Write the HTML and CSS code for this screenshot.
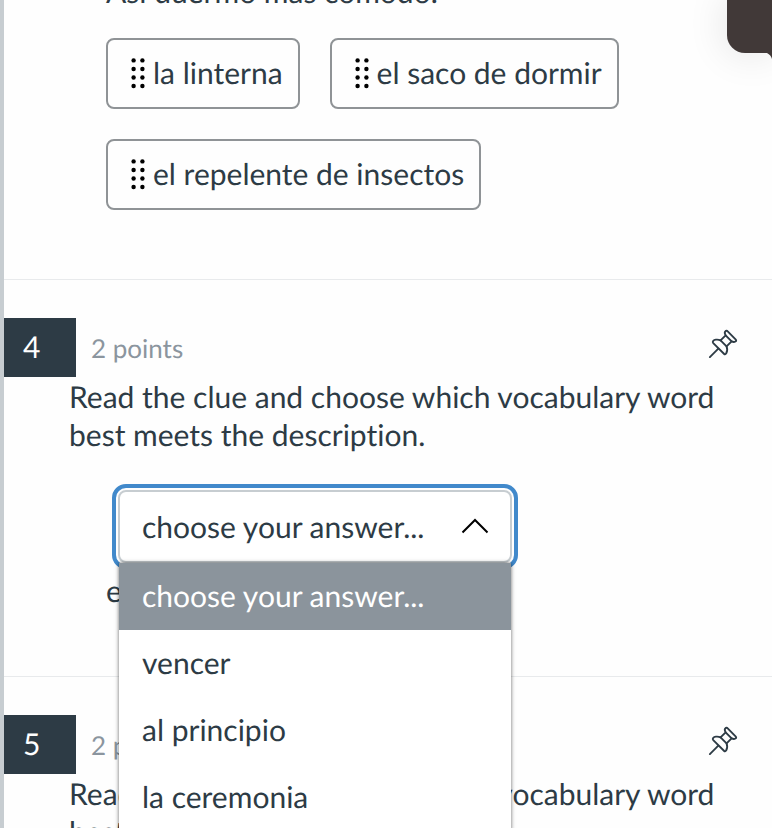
FILE: index.html
```html
<!DOCTYPE html>
<html lang="en">
<head>
    <meta charset="UTF-8">
    <meta name="viewport" content="width=device-width, initial-scale=1.0">
    <title>Vocabulary Quiz</title>
    <link rel="stylesheet" href="styles.css">
</head>
<body>
    <svg class="sprite" aria-hidden="true">
        <symbol id="grip" viewBox="0 0 14 32">
            <circle cx="2.6" cy="3.4" r="2.2"/><circle cx="11.4" cy="3.4" r="2.2"/>
            <circle cx="2.6" cy="12" r="2.2"/><circle cx="11.4" cy="12" r="2.2"/>
            <circle cx="2.6" cy="20.5" r="2.2"/><circle cx="11.4" cy="20.5" r="2.2"/>
            <circle cx="2.6" cy="29" r="2.2"/><circle cx="11.4" cy="29" r="2.2"/>
        </symbol>
        <symbol id="pin" viewBox="0 0 32 32">
            <path d="M2 30 L11 21"/>
            <path d="M5.6 15 C4.2 13.4 6 11.8 8.4 11.4 C10.6 11 12.2 11.6 13.4 12.2 L18.8 6.8 C17.8 5 17.6 3.2 18.6 2.4 C19.4 1.6 20.2 1.8 21 2.6 L29.4 11 C30.4 12 30.2 12.8 29.2 13.4 C27.8 14.2 26.4 13.8 25.2 13.2 L19.8 18.6 C20.8 21.2 20.8 23.8 19.4 26 C18.6 27.4 17.8 27.2 17 26.4 Z"/>
            <path d="M13.4 12.2 L19.8 18.6 M18.8 6.8 L25.2 13.2"/>
        </symbol>
    </svg>

    <main class="quiz">
        <section class="question question-drag">
            <p class="prompt">Así duermo más cómodo.</p>
            <div class="chips">
                <button class="chip"><svg class="grip"><use href="#grip"/></svg>la linterna</button>
                <button class="chip"><svg class="grip"><use href="#grip"/></svg>el saco de dormir</button>
                <button class="chip"><svg class="grip"><use href="#grip"/></svg>el repelente de insectos</button>
            </div>
        </section>

        <section class="question">
            <header class="question-header">
                <span class="number">4</span>
                <span class="points">2 points</span>
                <button class="pin" aria-label="Pin question 4"><svg><use href="#pin"/></svg></button>
            </header>
            <p class="text">Read the clue and choose which vocabulary word best meets the description.</p>
            <div class="answer">
                <div class="dropdown">
                    <select class="dropdown-select" aria-label="Answer for question 4">
                        <option>choose your answer...</option>
                        <option>vencer</option>
                        <option>al principio</option>
                        <option>la ceremonia</option>
                    </select>
                    <svg class="arrow" viewBox="0 0 28 16"><path d="M1.5 14.5 L14 2 L26.5 14.5"/></svg>
                    <ul class="dropdown-list" role="listbox" aria-label="Answers">
                        <li class="option selected" role="option" aria-selected="true">choose your answer...</li>
                        <li class="option" role="option">vencer</li>
                        <li class="option" role="option">al principio</li>
                        <li class="option" role="option">la ceremonia</li>
                    </ul>
                </div>
                <p class="clue">e</p>
            </div>
        </section>

        <section class="question">
            <header class="question-header">
                <span class="number">5</span>
                <span class="points">2 points</span>
                <button class="pin" aria-label="Pin question 5"><svg><use href="#pin"/></svg></button>
            </header>
            <p class="text">Read the clue and choose which vocabulary word best meets the description.</p>
        </section>
    </main>

    <div class="bubble">
        <svg class="bubble-tail" viewBox="0 0 5 6"><path d="M0 0 H5 V6 Q4 2 0 0 Z"/></svg>
    </div>
</body>
</html>
```

FILE: styles.css
```css
* {
    margin: 0;
    padding: 0;
    box-sizing: border-box;
}

body {
    font-family: Lato, sans-serif;
    font-size: 30px;
    line-height: 38px;
    font-variant-ligatures: none;
    text-rendering: geometricPrecision;
    color: #2d3b45;
    background: #fefefe;
    height: 100vh;
    overflow: hidden;
}

button,
select {
    font: inherit;
    color: inherit;
    text-rendering: inherit;
    background: none;
    border: none;
    cursor: pointer;
}

.sprite {
    display: none;
}

.quiz {
    height: 100vh;
    overflow: hidden;
    border-left: 4px solid #c7cdd1;
}

.question {
    padding: 38px 34px 66px 0;
    border-top: 1px solid #e8eaec;
}

/* scrolled partly out of view */
.question-drag {
    margin-top: -27px;
    padding: 0 102px 69px;
    border-top: none;
}

.chips {
    display: flex;
    flex-wrap: wrap;
    gap: 30px;
    margin-top: 27px;
}

.chip {
    display: flex;
    align-items: center;
    gap: 8px;
    padding: 14px 15px 15px 23px;
    border: 2px solid #8f9396;
    border-radius: 8px;
    white-space: nowrap;
}

.grip {
    width: 14px;
    height: 32px;
    fill: #000;
}

.question-header {
    display: flex;
    align-items: center;
}

.number {
    width: 72px;
    padding: 10px 19px 11px;
    background: #2d3b45;
    color: #fff;
}

.points {
    margin-left: 15px;
    font-size: 26px;
    color: #8b959e;
}

.pin {
    display: flex;
    margin-left: auto;
    margin-bottom: 8px;
}

.pin svg {
    width: 30px;
    height: 30px;
    fill: none;
    stroke: #2d3b45;
    stroke-width: 2;
    stroke-linecap: round;
    stroke-linejoin: round;
}

.text {
    padding: 1px 0 0 65px;
}

.answer {
    padding: 36px 0 0 102px;
}

.dropdown {
    position: relative;
    width: 394px;
    max-width: 100%;
    margin-left: 12px;
}

.dropdown-select {
    display: block;
    width: 100%;
    height: 73px;
    padding: 0 22px;
    appearance: none;
    border: 2px solid #c7cdd1;
    border-radius: 8px;
    background: #fff;
    outline: 4px solid #4189cb;
    outline-offset: 2px;
}

.arrow {
    position: absolute;
    top: 28px;
    right: 23px;
    width: 28px;
    height: 16px;
    fill: none;
    stroke: #000;
    stroke-width: 2;
    pointer-events: none;
}

.dropdown-list {
    position: absolute;
    top: 100%;
    left: 1px;
    right: 1px;
    z-index: 1;
    list-style: none;
    background: #fff;
    box-shadow: 0 0 4px rgba(0, 0, 0, 0.6);
}

.option {
    padding: 14px 23px 15px;
}

.selected {
    background: #8b949c;
    color: #fff;
}

.clue {
    padding-top: 9px;
}

.bubble {
    position: absolute;
    top: 0;
    right: 0;
    width: 45px;
    height: 53px;
    background: #413938;
    border-bottom-left-radius: 18px;
    box-shadow: 0 0 40px rgba(0, 0, 0, 0.12);
}

.bubble-tail {
    position: absolute;
    top: 100%;
    right: 0;
    width: 5px;
    height: 6px;
    fill: #413938;
}
```
